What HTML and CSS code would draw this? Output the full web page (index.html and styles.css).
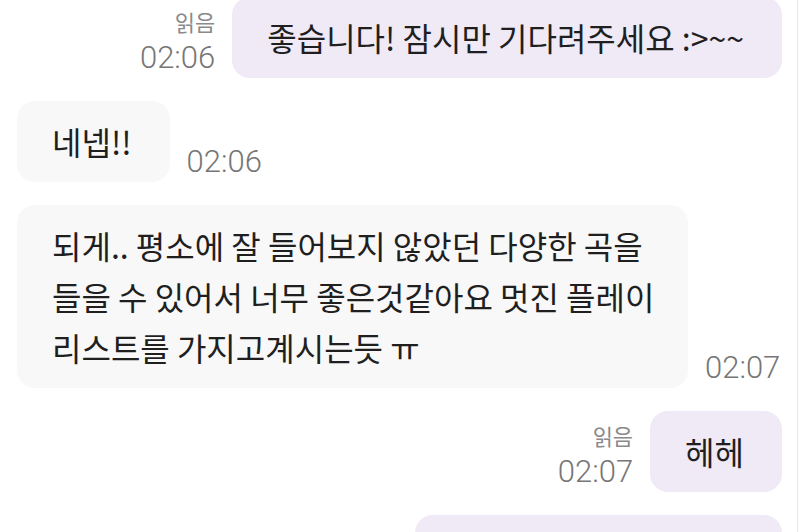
FILE: index.html
```html
<!DOCTYPE html>
<html>
  <head>
    <title>채팅</title>
    <link rel="stylesheet" href="styles.css">
  </head>
  <body>
    <div class="screen">
      <div class="chat">
        <div class="row sent">
          <div class="meta">
            <span class="read">읽음</span>
            <span class="time">02:06</span>
          </div>
          <div class="bubble">좋습니다! 잠시만 기다려주세요 :&gt;~~</div>
        </div>

        <div class="row received">
          <div class="bubble">네넵!!</div>
          <div class="meta">
            <span class="time">02:06</span>
          </div>
        </div>

        <div class="row received">
          <div class="bubble long">되게.. 평소에 잘 들어보지 않았던 다양한 곡을 들을 수 있어서 너무 좋은것같아요 멋진 플레이리스트를 가지고계시는듯 ㅠ</div>
          <div class="meta">
            <span class="time">02:07</span>
          </div>
        </div>

        <div class="row sent">
          <div class="meta">
            <span class="read">읽음</span>
            <span class="time">02:07</span>
          </div>
          <div class="bubble">헤헤</div>
        </div>

        <div class="row sent">
          <div class="bubble next"></div>
        </div>
      </div>
    </div>
  </body>
</html>
```

FILE: styles.css
```css
html,
body {
  margin: 0;
  padding: 0;
  height: 100%;
  overflow: hidden;
  background-color: #ffffff;
}

body {
  font-family: "Noto Sans CJK KR", "Noto Sans", sans-serif;
  color: #1f1f1f;
}

.screen {
  height: 100%;
  margin-right: 2px;
  border-right: 1px solid #e6e6e6;
  overflow: hidden;
}

.chat {
  display: flex;
  flex-direction: column;
  gap: 23px;
  margin-top: -3px;
  padding: 0 15px 0 17px;
}

.row {
  display: flex;
  align-items: flex-end;
  gap: 17px;
}

.row.sent {
  justify-content: flex-end;
}

.bubble {
  box-sizing: border-box;
  font-size: 32px;
  line-height: 51px;
  padding: 15px 38px 15px 35px;
  border-radius: 18px;
}

.sent .bubble {
  background-color: #f0e9f6;
}

.received .bubble {
  background-color: #f8f8f8;
}

.bubble.long {
  max-width: 671px;
  padding-right: 26px;
}

.bubble.next {
  width: 367px;
  height: 82px;
}

.meta {
  display: flex;
  flex-direction: column;
  align-items: flex-end;
  gap: 3px;
  padding-bottom: 1px;
}

.read {
  font-size: 22px;
  line-height: 30px;
  color: #8a8a8a;
}

.time {
  font-family: Roboto, "Liberation Sans", sans-serif;
  font-weight: 300;
  font-size: 31px;
  line-height: 38px;
  color: #767676;
}
```
